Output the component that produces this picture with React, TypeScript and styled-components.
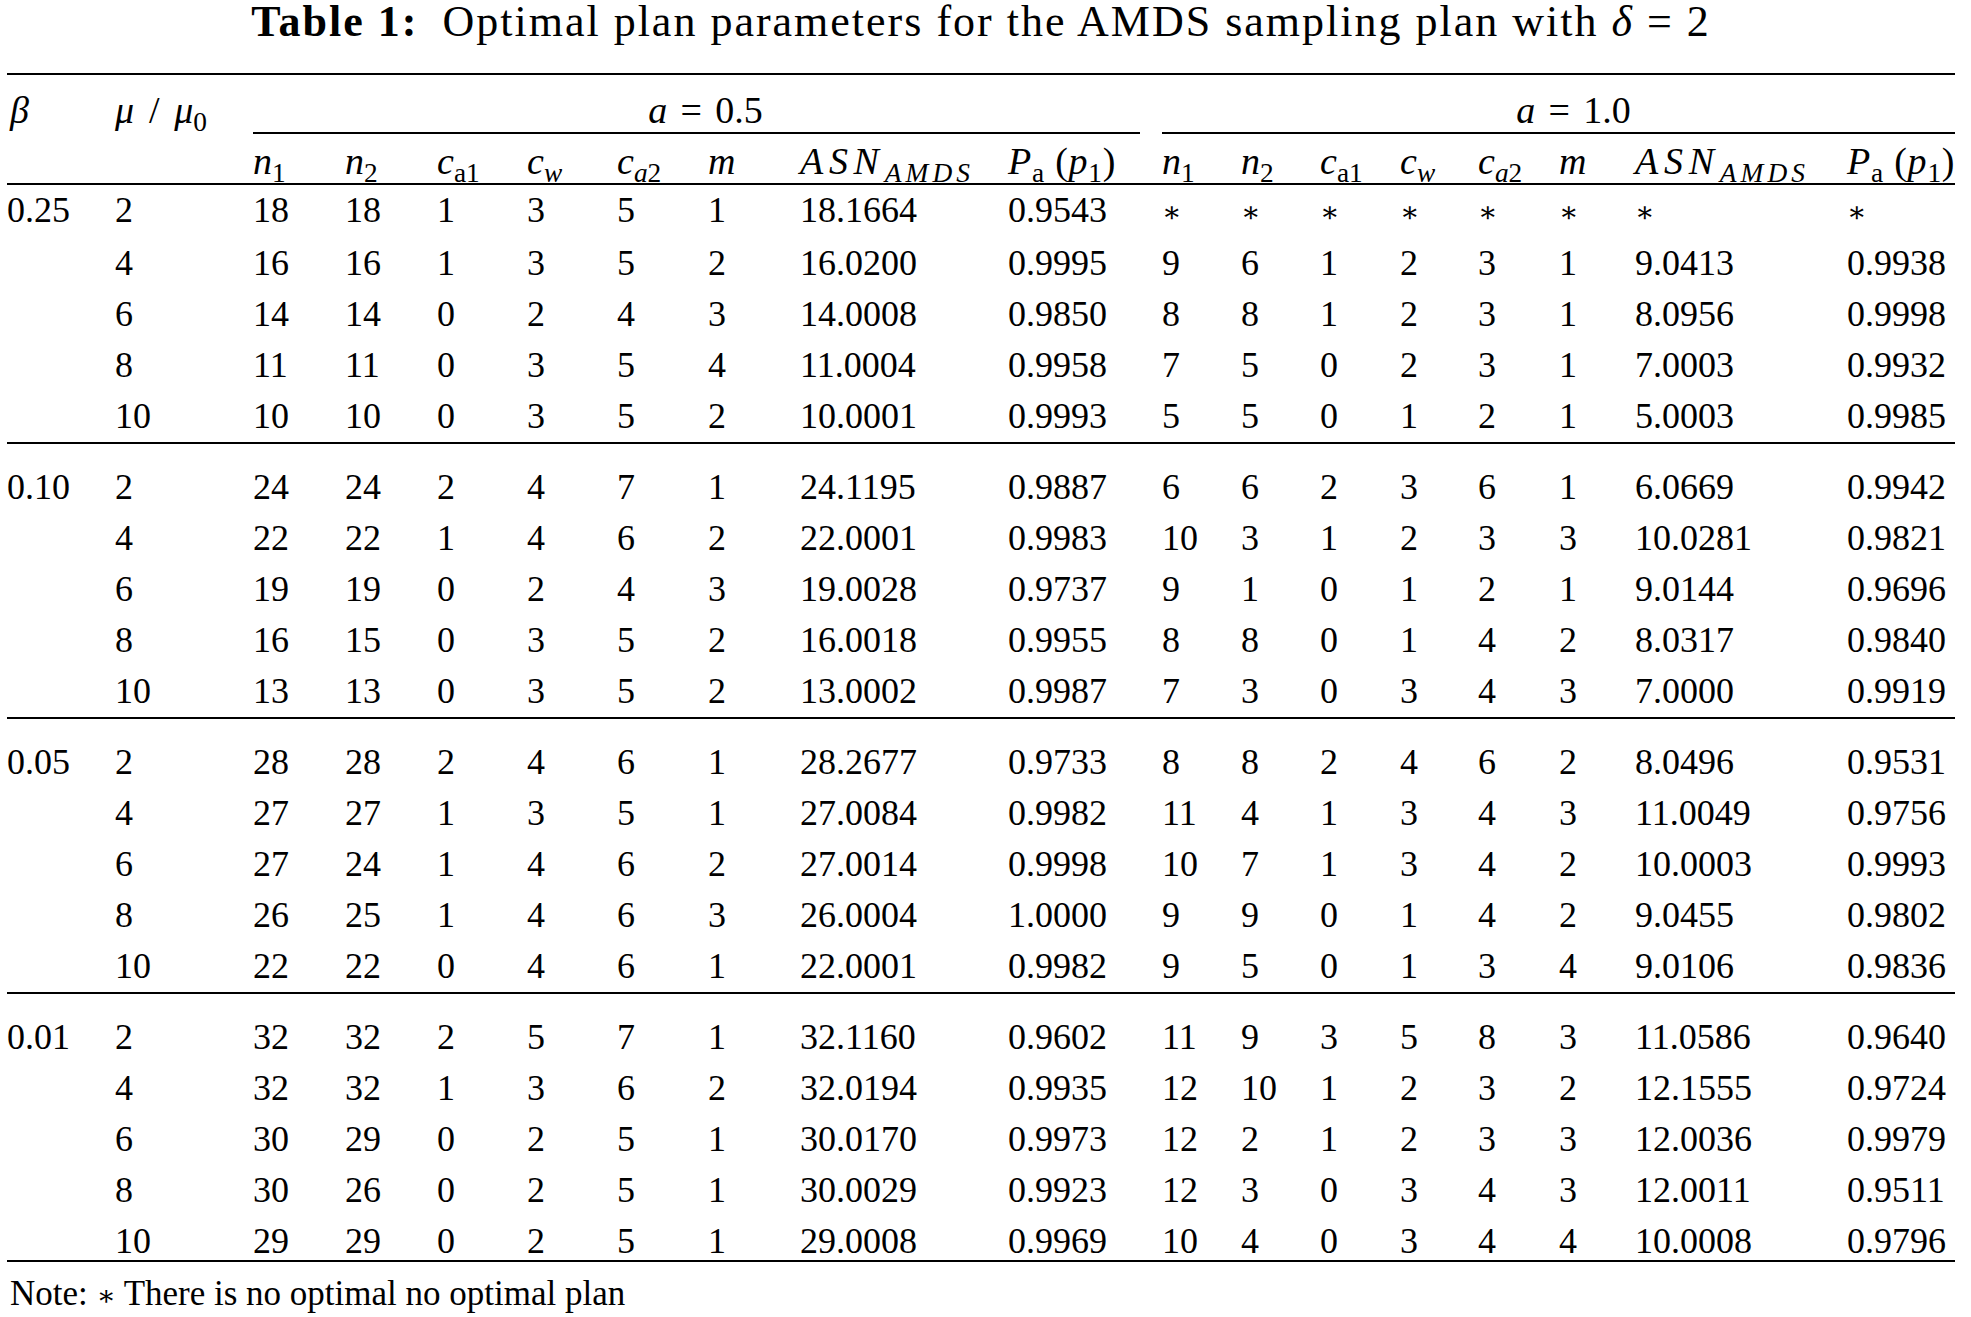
import React from "react";
import styled, { createGlobalStyle } from "styled-components";

const Global = createGlobalStyle`
  html, body { margin: 0; padding: 0; background: #ffffff; }
  body { font-family: "Liberation Serif", "Times New Roman", serif; color: #000000; }
`;

const Page = styled.div`
  width: 1971px;
  padding-left: 7px;
  box-sizing: border-box;
`;

const Title = styled.h1`
  margin: 0;
  width: 1948px;
  height: 73px;
  font-size: 44px;
  line-height: 44px;
  letter-spacing: 2px;
  font-weight: normal;
  text-align: center;
  white-space: nowrap;
`;

const Bold = styled.b`
  font-weight: bold;
`;

const I = styled.i`
  font-style: italic;
`;

const Wide = styled.i`
  font-style: italic;
  letter-spacing: 0.15em;
`;

const Spaced = styled.span`
  letter-spacing: 0.02em;
`;

const Sub = styled.sub`
  font-size: 0.72em;
  vertical-align: -0.3em;
  line-height: 0;
`;

const Star = styled.span`
  font-family: "DejaVu Serif", "Liberation Serif", serif;
  font-size: 0.8em;
`;

const Table = styled.table`
  border-collapse: separate;
  border-spacing: 0;
  table-layout: fixed;
  width: 1948px;
  font-size: 36px;
  border-top: 2px solid #000;
`;

const HeadCell = styled.th<{ $indent?: number }>`
  padding: 15px 0 0 ${(p) => p.$indent ?? 0}px;
  font-size: 38px;
  line-height: 40px;
  height: 42px;
  font-weight: normal;
  text-align: left;
  vertical-align: top;
  white-space: nowrap;
  word-spacing: 0.14em;
`;

const SpanCell = styled.th`
  padding: 0;
  font-weight: normal;
  vertical-align: top;
`;

const SpanHead = styled.div<{ $gap?: number; $shift?: number }>`
  margin-right: ${(p) => p.$gap ?? 0}px;
  padding: 15px 0 2px ${(p) => p.$shift ?? 0}px;
  font-size: 38px;
  line-height: 40px;
  text-align: center;
  border-bottom: 2px solid #000;
  white-space: nowrap;
  word-spacing: 0.1em;
`;

const SubHeadCell = styled.th`
  padding: 7px 0 2px 0;
  font-size: 38px;
  line-height: 40px;
  height: 40px;
  font-weight: normal;
  text-align: left;
  vertical-align: top;
  white-space: nowrap;
  border-bottom: 2px solid #000;
`;

const Cell = styled.td<{ $first?: boolean; $rule?: boolean; $short?: boolean }>`
  padding: ${(p) => (p.$first ? "18px" : p.$short ? "6px" : "0")} 0 0 0;
  height: ${(p) => (p.$short ? 38 : 51)}px;
  line-height: ${(p) => (p.$short ? 38 : 51)}px;
  vertical-align: top;
  text-align: left;
  white-space: nowrap;
  border-bottom: ${(p) => (p.$rule ? "2px solid #000" : "none")};
`;

const Note = styled.p`
  margin: 0;
  padding: 12px 0 0 3px;
  font-size: 35px;
  line-height: 40px;
  white-space: nowrap;
`;

const widths = [108, 138, 92, 92, 90, 90, 91, 92, 208, 154, 79, 79, 80, 78, 81, 76, 212, 108];

type Row = [string, string[], string[]];
type Group = { beta: string; rows: Row[] };

const S = ["*", "*", "*", "*", "*", "*", "*", "*"];

const groups: Group[] = [
  {
    beta: "0.25",
    rows: [
      ["2", ["18", "18", "1", "3", "5", "1", "18.1664", "0.9543"], S],
      ["4", ["16", "16", "1", "3", "5", "2", "16.0200", "0.9995"], ["9", "6", "1", "2", "3", "1", "9.0413", "0.9938"]],
      ["6", ["14", "14", "0", "2", "4", "3", "14.0008", "0.9850"], ["8", "8", "1", "2", "3", "1", "8.0956", "0.9998"]],
      ["8", ["11", "11", "0", "3", "5", "4", "11.0004", "0.9958"], ["7", "5", "0", "2", "3", "1", "7.0003", "0.9932"]],
      ["10", ["10", "10", "0", "3", "5", "2", "10.0001", "0.9993"], ["5", "5", "0", "1", "2", "1", "5.0003", "0.9985"]],
    ],
  },
  {
    beta: "0.10",
    rows: [
      ["2", ["24", "24", "2", "4", "7", "1", "24.1195", "0.9887"], ["6", "6", "2", "3", "6", "1", "6.0669", "0.9942"]],
      ["4", ["22", "22", "1", "4", "6", "2", "22.0001", "0.9983"], ["10", "3", "1", "2", "3", "3", "10.0281", "0.9821"]],
      ["6", ["19", "19", "0", "2", "4", "3", "19.0028", "0.9737"], ["9", "1", "0", "1", "2", "1", "9.0144", "0.9696"]],
      ["8", ["16", "15", "0", "3", "5", "2", "16.0018", "0.9955"], ["8", "8", "0", "1", "4", "2", "8.0317", "0.9840"]],
      ["10", ["13", "13", "0", "3", "5", "2", "13.0002", "0.9987"], ["7", "3", "0", "3", "4", "3", "7.0000", "0.9919"]],
    ],
  },
  {
    beta: "0.05",
    rows: [
      ["2", ["28", "28", "2", "4", "6", "1", "28.2677", "0.9733"], ["8", "8", "2", "4", "6", "2", "8.0496", "0.9531"]],
      ["4", ["27", "27", "1", "3", "5", "1", "27.0084", "0.9982"], ["11", "4", "1", "3", "4", "3", "11.0049", "0.9756"]],
      ["6", ["27", "24", "1", "4", "6", "2", "27.0014", "0.9998"], ["10", "7", "1", "3", "4", "2", "10.0003", "0.9993"]],
      ["8", ["26", "25", "1", "4", "6", "3", "26.0004", "1.0000"], ["9", "9", "0", "1", "4", "2", "9.0455", "0.9802"]],
      ["10", ["22", "22", "0", "4", "6", "1", "22.0001", "0.9982"], ["9", "5", "0", "1", "3", "4", "9.0106", "0.9836"]],
    ],
  },
  {
    beta: "0.01",
    rows: [
      ["2", ["32", "32", "2", "5", "7", "1", "32.1160", "0.9602"], ["11", "9", "3", "5", "8", "3", "11.0586", "0.9640"]],
      ["4", ["32", "32", "1", "3", "6", "2", "32.0194", "0.9935"], ["12", "10", "1", "2", "3", "2", "12.1555", "0.9724"]],
      ["6", ["30", "29", "0", "2", "5", "1", "30.0170", "0.9973"], ["12", "2", "1", "2", "3", "3", "12.0036", "0.9979"]],
      ["8", ["30", "26", "0", "2", "5", "1", "30.0029", "0.9923"], ["12", "3", "0", "3", "4", "3", "12.0011", "0.9511"]],
      ["10", ["29", "29", "0", "2", "5", "1", "29.0008", "0.9969"], ["10", "4", "0", "3", "4", "4", "10.0008", "0.9796"]],
    ],
  },
];

const subHeads: React.ReactNode[] = [
  <><I>n</I><Sub>1</Sub></>,
  <><I>n</I><Sub>2</Sub></>,
  <><I>c</I><Sub>a1</Sub></>,
  <><I>c</I><Sub><I>w</I></Sub></>,
  <><I>c</I><Sub><I>a</I>2</Sub></>,
  <I>m</I>,
  <><Wide>ASN</Wide><Sub><Wide>AMDS</Wide></Sub></>,
  <Spaced><I>P</I><Sub>a</Sub> (<I>p</I><Sub>1</Sub>)</Spaced>,
];

const renderValue = (v: string) => (v === "*" ? <Star>∗</Star> : v);

export default function App() {
  return (
    <Page>
      <Global />
      <Title>
        <Bold>Table 1:</Bold>{"\u2002"}Optimal plan parameters for the AMDS sampling plan with <I>δ</I> = 2
      </Title>
      <Table>
        <colgroup>
          {widths.map((w, i) => (
            <col key={i} style={{ width: w }} />
          ))}
        </colgroup>
        <thead>
          <tr>
            <HeadCell $indent={3}><I>β</I></HeadCell>
            <HeadCell><I>μ</I> / <I>μ</I><Sub>0</Sub></HeadCell>
            <SpanCell colSpan={8}>
              <SpanHead $gap={22} $shift={18}><I>a</I> = 0.5</SpanHead>
            </SpanCell>
            <SpanCell colSpan={8}>
              <SpanHead $shift={30}><I>a</I> = 1.0</SpanHead>
            </SpanCell>
          </tr>
          <tr>
            <SubHeadCell />
            <SubHeadCell />
            {subHeads.map((h, i) => (
              <SubHeadCell key={`l${i}`}>{h}</SubHeadCell>
            ))}
            {subHeads.map((h, i) => (
              <SubHeadCell key={`r${i}`}>{h}</SubHeadCell>
            ))}
          </tr>
        </thead>
        <tbody>
          {groups.map((g, gi) =>
            g.rows.map(([mu, left, right], ri) => {
              const first = gi > 0 && ri === 0;
              const rule = ri === g.rows.length - 1;
              const short = rule && gi === groups.length - 1;
              const cells = [ri === 0 ? g.beta : "", mu, ...left, ...right];
              return (
                <tr key={`${gi}-${ri}`}>
                  {cells.map((c, ci) => (
                    <Cell key={ci} $first={first} $rule={rule} $short={short}>
                      {renderValue(c)}
                    </Cell>
                  ))}
                </tr>
              );
            })
          )}
        </tbody>
      </Table>
      <Note>
        Note: <Star>∗</Star> There is no optimal no optimal plan
      </Note>
    </Page>
  );
}
